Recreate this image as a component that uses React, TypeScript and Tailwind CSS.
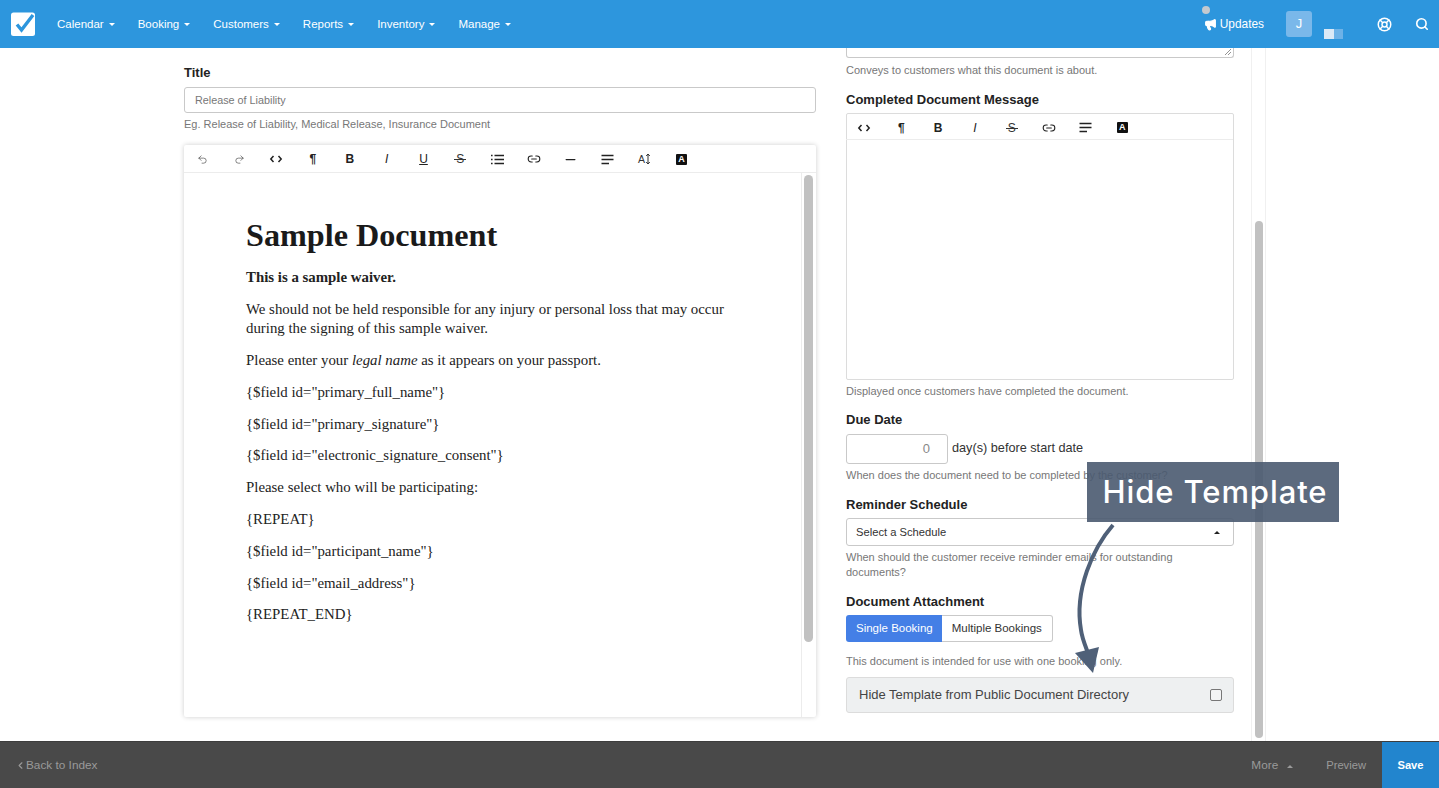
import { ChevronLeft, LifeBuoy, Link2, Megaphone, Minus, Redo2, Search, Undo2 } from 'lucide-react';
import type { ReactNode } from 'react';

const navItems = ['Calendar', 'Booking', 'Customers', 'Reports', 'Inventory', 'Manage'];

const Caret = ({ up = false, className = '' }: { up?: boolean; className?: string }) => (
  <span
    className={`inline-block w-0 h-0 border-x-[3px] border-x-transparent ${up ? 'border-b-[3px] border-b-current' : 'border-t-[3px] border-t-current'} ${className}`}
  />
);

const Code = () => (
  <svg width="14" height="14" viewBox="0 0 14 14" fill="none" stroke="#222" strokeWidth="1.5">
    <path d="M4.5 4 1.8 7l2.7 3M9.5 4l2.7 3-2.7 3" />
  </svg>
);

const Glyph = ({ children, className = '' }: { children: ReactNode; className?: string }) => (
  <span className={`text-[12px] leading-none text-[#222] ${className}`}>{children}</span>
);

const Strike = () => (
  <span className="relative flex items-center justify-center w-[12px] text-[12px] leading-none text-[#333]">
    S
    <span className="absolute left-0 right-0 top-[6px] h-px bg-[#333]" />
  </span>
);

const ListIcon = () => (
  <svg width="13" height="13" viewBox="0 0 13 13" fill="none" stroke="#222" strokeWidth="1.4">
    <path d="M3.5 2.5H13M3.5 6.5H13M3.5 10.5H13M0 2.5h1.6M0 6.5h1.6M0 10.5h1.6" />
  </svg>
);

const AlignIcon = () => (
  <svg width="13" height="13" viewBox="0 0 13 13" fill="none" stroke="#222" strokeWidth="1.4">
    <path d="M0.5 2.5H12.5M0.5 6.5H12.5M0.5 10.5H8" />
  </svg>
);

const TextSize = () => (
  <span className="flex items-center text-[10.5px] leading-none text-[#333]">
    A
    <svg width="6" height="12" viewBox="0 0 6 12" fill="none" stroke="#333" strokeWidth="1">
      <path d="M3 1v10M1.2 3 3 1l1.8 2M1.2 9 3 11l1.8-2" />
    </svg>
  </span>
);

const Highlight = () => (
  <span className="flex items-center justify-center w-[11px] h-[11px] rounded-[1px] bg-[#111] text-white text-[9px] font-bold leading-none">A</span>
);

const mainTools: ReactNode[] = [
  <Undo2 size={11} strokeWidth={1.3} color="#333" />,
  <Redo2 size={11} strokeWidth={1.3} color="#333" />,
  <Code />,
  <Glyph className="font-bold">¶</Glyph>,
  <Glyph className="font-bold text-[11.5px]">B</Glyph>,
  <Glyph className="italic">I</Glyph>,
  <Glyph className="underline text-[11px]">U</Glyph>,
  <Strike />,
  <ListIcon />,
  <Link2 size={14} strokeWidth={1.8} color="#222" />,
  <Minus size={15} strokeWidth={2} color="#222" />,
  <AlignIcon />,
  <TextSize />,
  <Highlight />,
];

const sideTools: ReactNode[] = [
  <Code />,
  <Glyph className="font-bold">¶</Glyph>,
  <Glyph className="font-bold text-[11.5px]">B</Glyph>,
  <Glyph className="italic">I</Glyph>,
  <Strike />,
  <Link2 size={14} strokeWidth={1.8} color="#222" />,
  <AlignIcon />,
  <Highlight />,
];

const Toolbar = ({ tools, height }: { tools: ReactNode[]; height: string }) => (
  <div className={`flex items-center border-b border-[#ececec] ${height}`}>
    {tools.map((tool, i) => (
      <span key={i} className="flex items-center justify-center w-[36.85px]">{tool}</span>
    ))}
  </div>
);

const Label = ({ children, className = '' }: { children: ReactNode; className?: string }) => (
  <div className={`text-[13px] leading-[16px] font-bold text-[#222] ${className}`}>{children}</div>
);

const Help = ({ children, className = '' }: { children: ReactNode; className?: string }) => (
  <div className={`text-[11px] leading-[15px] text-[#777] ${className}`}>{children}</div>
);

const paragraphs = [
  '{$field id="primary_full_name"}',
  '{$field id="primary_signature"}',
  '{$field id="electronic_signature_consent"}',
  'Please select who will be participating:',
  '{REPEAT}',
  '{$field id="participant_name"}',
  '{$field id="email_address"}',
  '{REPEAT_END}',
];

export default function App() {
  return (
    <div className="relative h-screen flex flex-col overflow-hidden bg-white font-['Liberation_Sans',sans-serif]">
      {/* Top nav */}
      <header className="h-12 shrink-0 flex items-center bg-[#2d96dd] text-white text-[11.5px]">
        <svg className="ml-[11px]" width="24" height="24" viewBox="0 0 24 24">
          <rect x="0" y="0.5" width="24" height="23.5" rx="2.5" fill="#fff" />
          <path d="M6 12.5 10.5 18 22 3" fill="none" stroke="#2d96dd" strokeWidth="3.4" />
        </svg>
        <nav className="flex items-center gap-[23px] ml-[22px] pt-px">
          {navItems.map(item => (
            <span key={item} className="flex items-center gap-[5px]">
              {item}
              <Caret />
            </span>
          ))}
        </nav>
        <div className="relative ml-auto flex items-center pt-px">
          <span className="absolute left-[-2px] top-[-9px] w-2 h-2 rounded-full bg-[#c4c9cf]" />
          <Megaphone size={13} fill="#fff" strokeWidth={2} />
          <span className="ml-[3px] text-[11.9px]">Updates</span>
        </div>
        <span className="ml-[22px] flex items-center justify-center w-[26px] h-[26px] rounded-[3px] bg-[#7ab8ea] text-[13px]">J</span>
        <span className="ml-[12px] mt-[19px] flex">
          <span className="w-[10px] h-[10px] bg-[#dbe9f6]" />
          <span className="w-[9px] h-[10px] bg-[#6db2e7]" />
        </span>
        <LifeBuoy className="ml-[34px]" size={15} strokeWidth={2.4} />
        <Search className="ml-[23px] mr-[10px]" size={14} strokeWidth={2.8} />
      </header>

      {/* Page body */}
      <main className="flex-1 min-h-0 flex">
        <section className="ml-[184px] w-[632px] pt-[17px]">
          <Label>Title</Label>
          <div className="mt-[6px] h-[26px] flex items-center px-[10px] border border-[#c9c9c9] rounded-[3px] text-[10.8px] text-[#777]">Release of Liability</div>
          <Help className="mt-[4px] text-[10.8px]">Eg. Release of Liability, Medical Release, Insurance Document</Help>
          <div className="mt-[13px] h-[572px] flex flex-col rounded-[2px] shadow-[0_0_5px_rgba(0,0,0,0.2)]">
            <Toolbar tools={mainTools} height="h-[28px] pt-px" />
            <div className="flex-1 min-h-0 flex">
              <div className="flex-1 pl-[62px] pt-[43px] font-['Liberation_Serif',serif] text-[14.85px] leading-[19px] text-[#222]">
                <h1 className="text-[32.2px] leading-[38px] font-bold text-[#1a1a1a]">Sample Document</h1>
                <p className="mt-[14px] font-bold">This is a sample waiver.</p>
                <p className="mt-[13px]">We should not be held responsible for any injury or personal loss that may occur<br />during the signing of this sample waiver.</p>
                <p className="mt-[13px]">Please enter your <em>legal name</em> as it appears on your passport.</p>
                {paragraphs.map(text => (
                  <p key={text} className="mt-[12.8px]">{text}</p>
                ))}
              </div>
              <div className="w-[15px] border-l border-[#ececec] pt-[2px] pl-[2px]">
                <div className="w-[9px] h-[467px] rounded-full bg-[#c1c1c1]" />
              </div>
            </div>
          </div>
        </section>

        <section className="ml-[30px] w-[388px]">
          <div className="relative h-[10px] border-x border-b border-[#c9c9c9] rounded-b-[3px]">
            <svg className="absolute right-[1px] bottom-[1px]" width="8" height="8" viewBox="0 0 8 8" stroke="#777" strokeWidth="0.8">
              <path d="M1 7 7 1M4 7l3-3" />
            </svg>
          </div>
          <Help className="mt-[5px]">Conveys to customers what this document is about.</Help>
          <Label className="mt-[14px]">Completed Document Message</Label>
          <div className="mt-[5px] h-[267px] border border-[#dcdcdc] rounded-[2px]">
            <Toolbar tools={sideTools} height="h-[26px] pt-[2px] -ml-px" />
          </div>
          <Help className="mt-[4px]">Displayed once customers have completed the document.</Help>
          <Label className="mt-[13px]">Due Date</Label>
          <div className="mt-[6px] flex items-center">
            <div className="w-[102px] h-[30px] flex items-center justify-end pr-[17px] border border-[#c9c9c9] rounded-[3px] text-[13px] text-[#888]">0</div>
            <span className="ml-[4px] text-[12.7px] text-[#333]">day(s) before start date</span>
          </div>
          <Help className="mt-[4px]">When does the document need to be completed by the customer?</Help>
          <Label className="mt-[14px]">Reminder Schedule</Label>
          <div className="mt-[5px] h-[28px] flex items-center justify-between pl-[9px] pr-[13px] border border-[#c9c9c9] rounded-[3px] text-[11.2px] text-[#333]">
            Select a Schedule
            <Caret up className="text-[#222]" />
          </div>
          <Help className="mt-[4px] w-[340px]">When should the customer receive reminder emails for outstanding documents?</Help>
          <Label className="mt-[14px]">Document Attachment</Label>
          <div className="mt-[5px] flex w-fit h-[27px] text-[11.5px]">
            <span className="flex items-center pl-[10px] pr-[9px] rounded-l-[3px] bg-[#447fe6] text-white">Single Booking</span>
            <span className="flex items-center px-[10px] border border-l-0 border-[#c9c9c9] rounded-r-[3px] text-[#333]">Multiple Bookings</span>
          </div>
          <Help className="mt-[12px]">This document is intended for use with one booking only.</Help>
          <div className="mt-[8px] h-[36px] flex items-center justify-between pl-[12px] pr-[11px] bg-[#eef0f1] border border-[#dcdcdc] rounded-[3px] text-[13px] text-[#444]">
            Hide Template from Public Document Directory
            <span className="w-[12px] h-[12px] border border-[#777] rounded-[2px] bg-[#f3f4f5]" />
          </div>
        </section>

        {/* Page scrollbar */}
        <div className="ml-[17px] w-[15px] border-x border-[#f0f0f0] relative">
          <div className="absolute left-[3px] top-[173px] w-[8px] h-[517px] rounded-full bg-[#c1c1c1]" />
        </div>
      </main>

      {/* Bottom bar */}
      <footer className="h-[47px] shrink-0 flex items-center bg-[#494949] border-t border-[#3d3d3d] text-[11.2px] text-[#9a9a9a]">
        <span className="ml-[15px] mt-px flex items-center text-[11.8px]">
          <ChevronLeft size={11} strokeWidth={2.4} />
          Back to Index
        </span>
        <span className="ml-auto flex items-center mt-[2px] text-[11.8px]">
          More
          <Caret up className="ml-[9px]" />
        </span>
        <span className="ml-[33px]">Preview</span>
        <span className="ml-[16px] w-[57px] h-full flex items-center justify-center bg-[#2285ce] text-white font-bold">Save</span>
      </footer>

      {/* Tutorial annotation */}
      <div className="absolute left-[1087px] top-[462px] w-[252px] h-[60px] flex items-center justify-center pl-[4px] bg-[#4a5a70]/90 text-white font-['Inter',sans-serif] font-medium text-[31px] tracking-[0.9px]">
        Hide Template
      </div>
      <svg className="absolute left-[1060px] top-[520px]" width="70" height="170" viewBox="0 0 70 170" fill="none">
        <path d="M53 5C33 28 14 70 21 110C22 118 25 125 28 133" stroke="#4f6078" strokeWidth="4" />
        <path d="M15 133 39 127 33 153Z" fill="#4f6078" />
      </svg>
    </div>
  );
}
